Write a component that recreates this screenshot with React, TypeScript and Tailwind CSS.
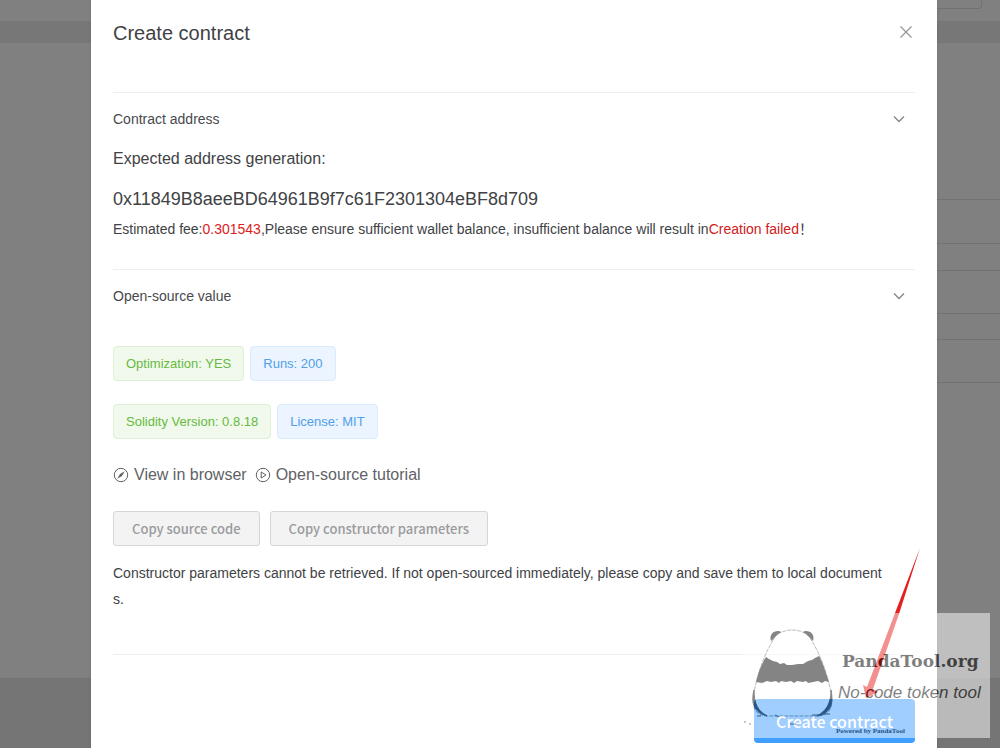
import React from 'react';

interface CollapseHeaderProps {
  title: string;
}

function CollapseHeader({ title }: CollapseHeaderProps) {
  return (
    <button type="button" className="flex h-[52px] w-full items-center justify-between pr-2 text-left text-sm text-[#484a4d]">
      <span>{title}</span>
      <svg viewBox="0 0 16 16" className="h-4 w-4" fill="none" stroke="#85888c" strokeWidth="1.4">
        <path d="M3 5.5 8 10.5 13 5.5" />
      </svg>
    </button>
  );
}

interface TagProps {
  kind: 'success' | 'primary';
  children: React.ReactNode;
}

const tagStyles = {
  success: 'border-[#deefd6] bg-[#f0f9eb] text-[#67b942]',
  primary: 'border-[#d9ebff] bg-[#ebf4ff] text-[#519fe6]',
};

function Tag({ kind, children }: TagProps) {
  return (
    <span className={`flex h-[35px] items-center rounded border px-3 text-[13px] ${tagStyles[kind]}`}>
      {children}
    </span>
  );
}

// The page that stays dimmed behind the dialog
function PageBehind() {
  return (
    <div className="flex min-h-screen flex-col bg-[#808080]">
      <div className="flex h-[21px] justify-end pr-[18px]">
        <div className="h-[9px] w-24 rounded-b border border-t-0 border-[#717171]" />
      </div>
      <div className="h-[22px] bg-[#777777]" />
      <div className="ml-auto h-[635px] w-1/2 pt-[156px]">
        <div className="h-11 border-t border-[#727272]" />
        <div className="h-[27px] border-t border-[#727272]" />
        <div className="h-[43px] border-t border-[#727272]" />
        <div className="h-[26px] border-t border-[#727272]" />
        <div className="h-11 border-y border-[#727272]" />
      </div>
      <div className="flex-1 bg-[#757575]" />
    </div>
  );
}

function Panda() {
  return (
    <svg viewBox="0 0 100 125" className="h-[125px] w-[100px] shrink-0">
      <path d="M29 28C27 22 31 18 36 18C39 18 40 20 40 22C35 23 32 25 29 28Z" fill="#0c0c0c" />
      <path d="M71 28C73 22 69 18 64 18C61 18 60 20 60 22C65 23 68 25 71 28Z" fill="#0c0c0c" />
      <path
        d="M30 29C34 20 42 17 50 17C58 17 66 20 70 28C78 42 85 58 89 80C92 96 87 103 74 103L27 103C14 103 9 96 12 80C16 58 22 43 30 29Z"
        fill="#fff"
        stroke="#444"
        strokeWidth="0.7"
        strokeDasharray="4 1"
      />
      <path
        d="M24 44L27 46L31 48L35 49L38 51L42 50L45 52L50 52L56 51L61 51L66 48L70 47L73 45L77 43C81 50 84 60 87 69L83 68L80 70L76 68L71 69L66 70L64 68L61 69L55 68L52 70L49 68L44 69L39 68L37 70L34 68L29 69L25 68L20 70L14 69C16 60 19 52 24 44Z"
        fill="#0c0c0c"
      />
      <path d="M12 77C9 89 11 99 25 103C16 98 12 91 12 77Z" fill="#111" stroke="#111" strokeWidth="1" />
      <path d="M89 77C92 91 88 101 75 103C84 98 89 91 89 77Z" fill="#111" stroke="#111" strokeWidth="1" />
      <path d="M15 103H19M22 101L25 103M33 102L37 104M70 102H77M80 101H88M2 109H4M7 111H9M48 111H54" stroke="#222" strokeWidth="1" />
    </svg>
  );
}

function Watermark() {
  return (
    <div className="pointer-events-none absolute right-[10px] top-[613px] flex h-[125px] w-[248px] bg-white font-['DejaVu_Serif',serif] text-black opacity-50">
      <Panda />
      <div className="flex flex-col whitespace-nowrap pt-9">
        <p className="text-[17px] font-bold leading-6">PandaTool.org</p>
        <p className="-ml-1 mt-2 font-['Liberation_Sans',sans-serif] text-[17px] italic leading-6">No-code token tool</p>
        <p className="-ml-1.5 mt-5 font-['Liberation_Serif',serif] text-[7px] font-bold leading-3">Powered by PandaTool</p>
      </div>
    </div>
  );
}

function Arrow() {
  return (
    <svg viewBox="0 0 60 152" className="pointer-events-none absolute right-[79px] top-[547px] h-[152px] w-[60px]">
      <path d="M59 1L38 67L12 142L17 145L5 151L2 138L6 140L34 66Z" fill="#e5201f" />
    </svg>
  );
}

export default function App() {
  return (
    <div className="relative overflow-hidden font-['Liberation_Sans','Noto_Sans_CJK_SC',sans-serif]">
      <PageBehind />

      <div className="absolute inset-0 pl-[91px] pr-[63px]">
        <div role="dialog" aria-labelledby="titulo" className="min-h-full bg-white px-[22px] text-[#404245] shadow">
          <div className="flex h-[92px] items-start justify-between pt-5">
            <h1 id="titulo" className="text-xl leading-[26px]">Create contract</h1>
            <button type="button" aria-label="Close" className="pr-px pt-1">
              <svg viewBox="0 0 16 16" className="h-4 w-4" fill="none" stroke="#929599" strokeWidth="1.2">
                <path d="M2.5 2.5 13.5 13.5M13.5 2.5 2.5 13.5" />
              </svg>
            </button>
          </div>

          <section className="border-t border-[#eeeff2] pb-7">
            <CollapseHeader title="Contract address" />
            <p className="text-base leading-7">Expected address generation:</p>
            <p className="mt-3 text-lg leading-7">0x11849B8aeeBD64961B9f7c61F2301304eBF8d709</p>
            <p className="mt-1 text-sm leading-6">
              Estimated fee:<span className="text-[#e02020]">0.301543</span>,Please ensure sufficient wallet balance, insufficient balance will result in<span className="text-[#d02020]">Creation failed</span>！
            </p>
          </section>

          <section className="border-y border-[#eeeff2] pb-[42px]">
            <CollapseHeader title="Open-source value" />
            <div className="mt-6 flex gap-1.5">
              <Tag kind="success">Optimization: YES</Tag>
              <Tag kind="primary">Runs: 200</Tag>
            </div>
            <div className="mt-[23px] flex gap-1.5">
              <Tag kind="success">Solidity Version: 0.8.18</Tag>
              <Tag kind="primary">License: MIT</Tag>
            </div>
            <div className="mt-6 flex gap-2 text-base leading-6 text-[#606266]">
              <a href="#browser" className="flex items-center gap-[5px]">
                <svg viewBox="0 0 16 16" className="h-4 w-4" fill="none" stroke="#606266">
                  <circle cx="8" cy="8" r="6.7" />
                  <path d="M11.8 4.2 9 9 4.2 11.8 7 7Z" fill="#606266" stroke="none" />
                </svg>
                View in browser
              </a>
              <a href="#tutorial" className="flex items-center gap-[5px]">
                <svg viewBox="0 0 16 16" className="h-4 w-4" fill="none" stroke="#606266">
                  <circle cx="8" cy="8" r="6.7" />
                  <path d="M6.2 5 11 8 6.2 11Z" strokeLinejoin="round" />
                </svg>
                Open-source tutorial
              </a>
            </div>
            <div className="mt-6 flex gap-2.5 font-['Noto_Sans_CJK_SC',sans-serif] text-[13px] font-medium text-[#9a9b9d]">
              <button type="button" className="h-[35px] rounded-[3px] border border-[#d6d6d6] bg-[#f3f3f3] px-[18px]">Copy source code</button>
              <button type="button" className="h-[35px] rounded-[3px] border border-[#d6d6d6] bg-[#f3f3f3] px-[18px]">Copy constructor parameters</button>
            </div>
            <p className="mt-[14px] break-all pr-7 text-sm leading-[26px]">
              Constructor parameters cannot be retrieved. If not open-sourced immediately, please copy and save them to local documents.
            </p>
          </section>

          <div className="flex justify-end pb-[5px] pt-11">
            <button type="button" className="h-11 rounded bg-[#409eff] px-[22px] font-['Noto_Sans_CJK_SC',sans-serif] text-base font-medium text-white">
              Create contract
            </button>
          </div>
        </div>
      </div>

      <Arrow />
      <Watermark />
    </div>
  );
}
